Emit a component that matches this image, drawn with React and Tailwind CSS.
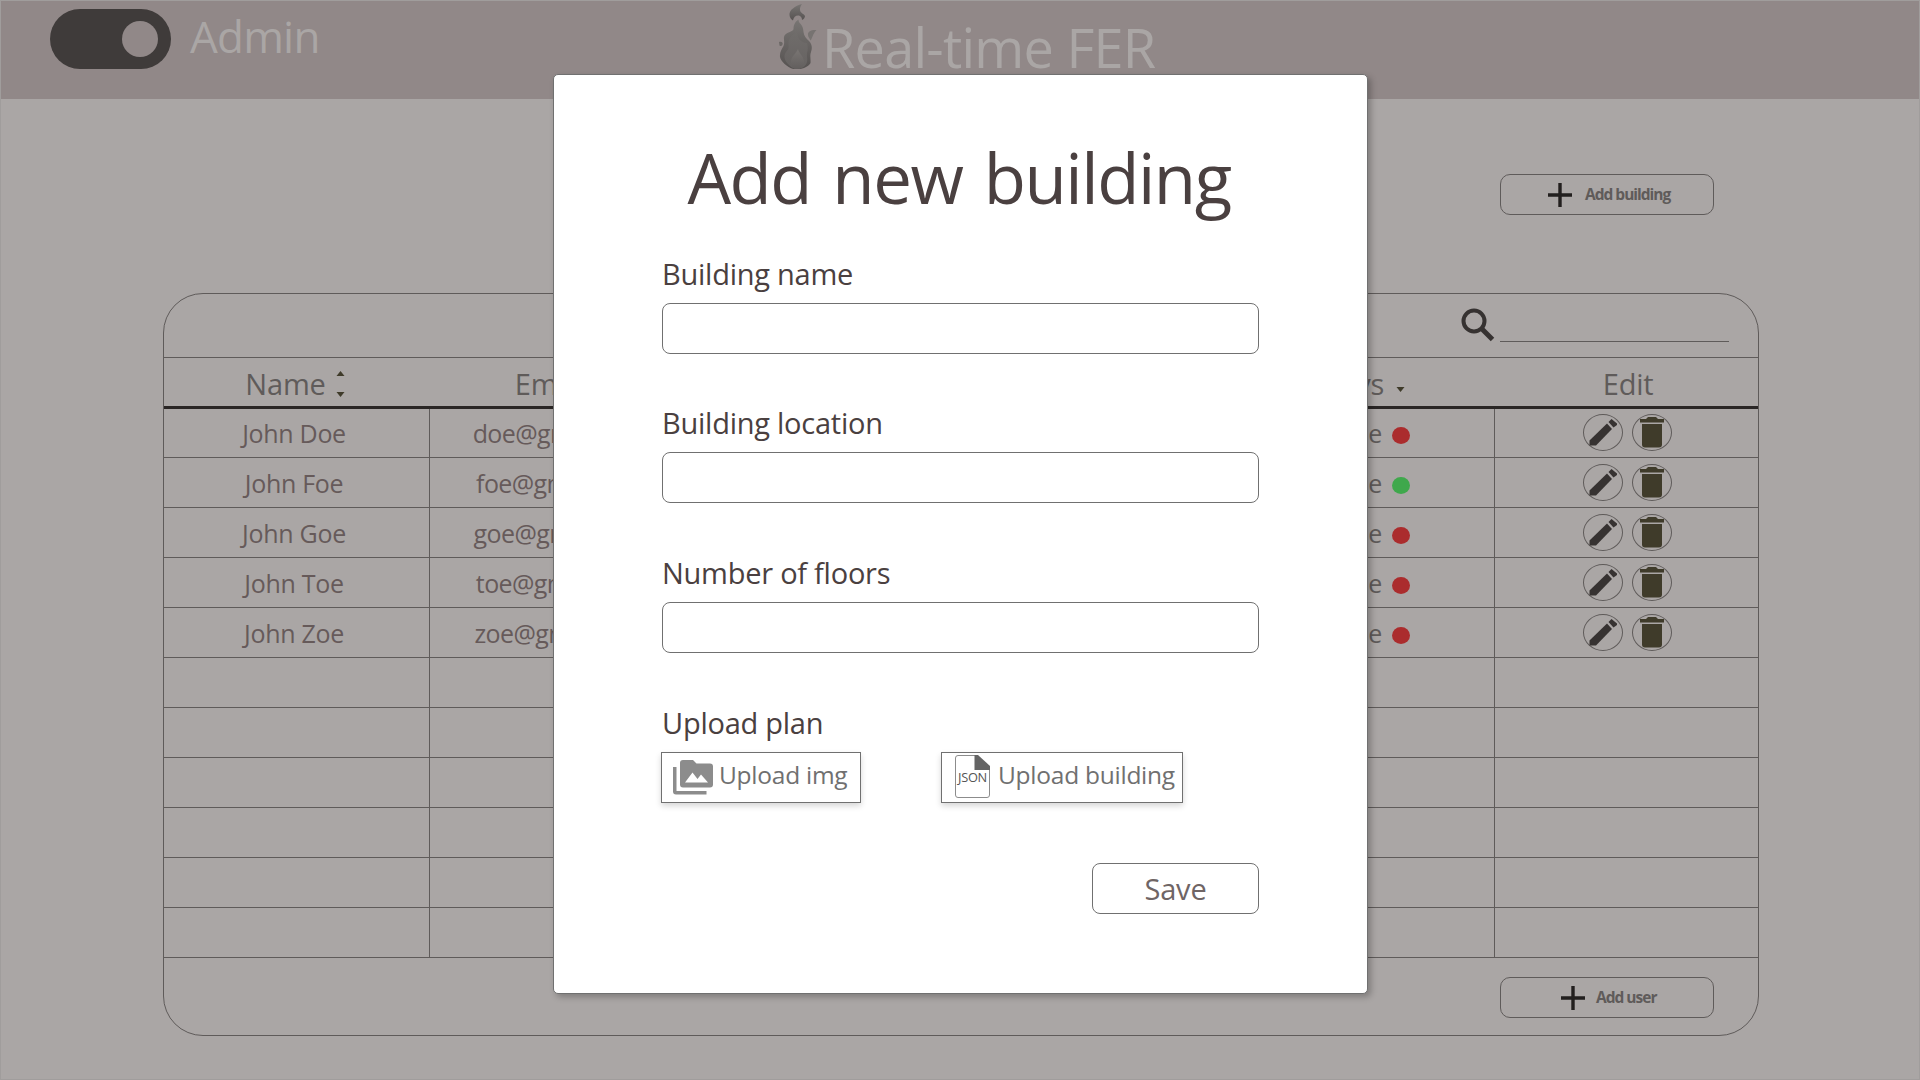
import React from "react";

const ROWS = [
  { name: "John Doe", email: "doe@gmail.com", status: "Offline" },
  { name: "John Foe", email: "foe@gmail.com", status: "Online" },
  { name: "John Goe", email: "goe@gmail.com", status: "Offline" },
  { name: "John Toe", email: "toe@gmail.com", status: "Offline" },
  { name: "John Zoe", email: "zoe@gmail.com", status: "Offline" },
];
const EMPTY_ROWS = 6;

function Flame() {
  return (
    <svg className="block h-[68px] w-[40px]" viewBox="0 0 40 68">
      <defs>
        <linearGradient id="flameOuter" x1="0" y1="0" x2="0" y2="1">
          <stop offset="0" stopColor="#787573" />
          <stop offset="1" stopColor="#565251" />
        </linearGradient>
        <linearGradient id="flameInner" x1="0" y1="0" x2="0" y2="1">
          <stop offset="0" stopColor="#716e6c" />
          <stop offset="1" stopColor="#666261" />
        </linearGradient>
        <linearGradient id="flameCore" x1="0" y1="0" x2="0" y2="1">
          <stop offset="0" stopColor="#7a7674" />
          <stop offset="1" stopColor="#625e5d" />
        </linearGradient>
      </defs>
      <path
        fill="url(#flameOuter)"
        d="M24 3C17 5 11 9 11.500 14C11.700 16.500 13 18.500 15 19.500C15.500 16 18 14 21 14.500C23 15 24 17 24 19C26 18 27 16.500 27 15C26 12.500 22.500 12.500 22 9C21.800 7 22.500 5 24 3Z"
      />
      <path
        fill="url(#flameOuter)"
        d="M20.500 18.500C18 20 15.500 23 15.500 28C15.500 31 7 31 6 36C5.500 39 7 41 5.500 45C4 48 1.500 51 2 56C3 61 11 68 18 68.500C25 68.500 31 65 32.500 62C33 58 31.500 55 33 51C34.500 47 34 43 31 40C28 37 26 35 25.500 31C25.200 28 25 27 24 25C23 22.500 20.500 22 20.500 18.500Z"
      />
      <path
        fill="url(#flameInner)"
        d="M19 27C19 32 11 35 10.500 41C10.200 45 12 47 8 51C5 55 7 60 10 63C13 66.500 16 68 19 68C24 68 28 65 29 61C30 57 28 55 29.500 50C30 47 29.500 44 29 42C24 42 18 38 19 27Z"
      />
      <path
        fill="url(#flameCore)"
        d="M20 48C18 53 13 55 13 61C13 65 16 68 19 68C23 68 26 65 26 61C26 55 21 53 20 48Z"
      />
      <path fill="#777371" d="M38.500 29C34 28.500 29.500 30 30 34C30.200 36.500 32 37.500 32.500 39.500C34 38.500 34.500 33 38.500 29Z" />
      <path fill="#6c6866" d="M1 41C3 40 5.500 41.500 4.500 43.500C4 45 2.500 45.500 1.500 44.500Z" />
    </svg>
  );
}

function Pencil() {
  return (
    <span className="flex h-[37px] w-[40px] items-center justify-center rounded-[50%] border border-[#5f5b5a]">
      <svg className="block h-[27px] w-[28px]" viewBox="0 0 28 27" fill="#363231">
        <path d="M0.500 21.500L18 4.500L23 10L7 26.500H0.500Z" />
        <path d="M19.500 3L22.500 0L28 4.500V6L24.500 8.500Z" />
      </svg>
    </span>
  );
}

function Trash() {
  return (
    <span className="flex h-[37px] w-[40px] items-center justify-center rounded-[50%] border border-[#5f5b5a]">
      <svg className="block h-[31px] w-[24px]" viewBox="0 0 24 31" fill="#3f3b2a">
        <path d="M0 2H6L8 0H16L18 2H24V5.500H0Z" />
        <path d="M2 7H22V27.500Q22 30.500 19 30.500H5Q2 30.500 2 27.500Z" />
      </svg>
    </span>
  );
}

function Plus() {
  return (
    <svg className="block h-6 w-6" viewBox="0 0 24 24" fill="#221f1e">
      <path d="M10.300 0H13.700V10.300H24V13.700H13.700V24H10.300V13.700H0V10.300H10.300Z" />
    </svg>
  );
}

function Field({ label }) {
  return (
    <label className="flex h-[149.4px] flex-col">
      <span className="h-[59px] pt-px text-[29px] leading-[58px] tracking-[-0.25px]">{label}</span>
      <input className="h-[51px] w-full rounded-[8px] border border-[#707070] bg-white outline-none" />
    </label>
  );
}

export default function App() {
  return (
    <div className="relative h-[1080px] w-[1920px] overflow-hidden border border-[#a09d9c] bg-[#aaa6a5] font-['Open_Sans','Noto_Sans',sans-serif] whitespace-nowrap">
      <header className="flex h-[98px] items-start bg-[#918888] text-[#aaa6a5]">
        <div className="mt-2 ml-[49px] flex h-[60px] w-[121px] items-center justify-end rounded-full bg-[#3f3b3a] pr-[13px]">
          <span className="h-9 w-9 rounded-full bg-[#918888]" />
        </div>
        <span className="ml-[19px] w-[588px] text-[44px] leading-[71px] tracking-[-0.8px]">Admin</span>
        <Flame />
        <h1 className="ml-[4px] text-[54px] leading-[93px] tracking-[-0.75px]">Real-time FER</h1>
      </header>

      <div className="flex h-[194px] justify-end pt-[75px] pr-[205px]">
        <button className="flex h-[41px] w-[214px] items-center rounded-[10px] border border-[#5f5b5a] pl-[47px] text-[15.5px] font-bold text-[#5f5b5a]">
          <Plus />
          <span className="mb-[2px] ml-[13px] leading-[38px] tracking-[-1px]">Add building</span>
        </button>
      </div>

      <main className="ml-[162px] h-[743px] w-[1596px] rounded-[40px] border border-[#5f5b5a]">
        <div className="flex h-[64px] items-start justify-end border-b border-[#5f5b5a] pr-[29px]">
          <svg className="mt-[14px] block h-[34px] w-[34px]" viewBox="0 0 34 34" fill="none" stroke="#363231">
            <circle cx="13" cy="13" r="10.500" strokeWidth="4" />
            <path d="M20.500 20.500L31.500 31.500" strokeWidth="5" />
          </svg>
          <span className="ml-[5px] h-[48px] w-[229px] border-b border-[#5f5b5a]" />
        </div>

        <div className="relative z-10 grid h-[51px] grid-cols-[266px_repeat(4,266.3px)_1fr] border-b-[3px] border-[#2a2625] text-[29px] leading-[51px] tracking-[-0.2px] text-[#5f5b5a]">
          <div className="flex items-center justify-center pr-[4px]">
            Name
            <svg className="ml-[10px] block h-[26px] w-[9px]" viewBox="0 0 9 26" fill="#3f3b2a">
              <path d="M4.500 0L8.500 5H0.500Z" />
              <path d="M4.500 26L8.500 21H0.500Z" />
            </svg>
          </div>
          <div className="flex items-center justify-center">
            Email
            <span className="w-6" />
          </div>
          <div />
          <div />
          <div className="flex items-center justify-end pr-[90px]">
            Days
            <svg className="mt-[11px] ml-[12px] block h-[5px] w-[9px]" viewBox="0 0 9 5" fill="#3f3b2a">
              <path d="M4.500 5L8.500 0H0.500Z" />
            </svg>
          </div>
          <div className="pl-[3px] text-center">Edit</div>
        </div>

        <div className="-mt-px">
          {ROWS.map((row) => (
            <div key={row.name} className="grid h-[50px] grid-cols-[266px_repeat(4,266.3px)_1fr] border-b border-[#5f5b5a] text-[25px] leading-[51px] text-[#665a5a]">
              <div className="border-r border-[#5f5b5a] pr-[5px] text-center tracking-[-0.3px]">{row.name}</div>
              <div className="pr-[2px] text-center tracking-[-0.6px]">{row.email}</div>
              <div />
              <div />
              <div className="flex items-center justify-end border-r border-[#5f5b5a] pr-[84px] text-[#5f5b5a]">
                {row.status}
                <span
                  className={
                    row.status === "Online"
                      ? "mt-[3px] ml-[10px] h-[17px] w-[18px] rounded-[50%] bg-[#3fa84c]"
                      : "mt-[3px] ml-[10px] h-[17px] w-[18px] rounded-[50%] bg-[#ab2c2d]"
                  }
                />
              </div>
              <div className="flex items-center justify-center gap-[9px] pb-[2px] pl-px">
                <Pencil />
                <Trash />
              </div>
            </div>
          ))}
          {Array.from({ length: EMPTY_ROWS }, (_, i) => (
            <div key={i} className="grid h-[50px] grid-cols-[266px_repeat(4,266.3px)_1fr] border-b border-[#5f5b5a]">
              <div className="border-r border-[#5f5b5a]" />
              <div />
              <div />
              <div />
              <div className="border-r border-[#5f5b5a]" />
              <div />
            </div>
          ))}
        </div>

        <div className="flex justify-end pt-[19px] pr-[44px]">
          <button className="flex h-[41px] w-[214px] items-center rounded-[10px] border border-[#5f5b5a] pl-[60px] text-[15.5px] font-bold text-[#5f5b5a]">
            <Plus />
            <span className="mb-[2px] ml-[11px] leading-[38px] tracking-[-1px]">Add user</span>
          </button>
        </div>
      </main>

      <section className="absolute top-[73px] left-[552px] z-20 h-[920px] w-[815px] rounded-[5px] border border-[#707070] bg-white px-[108px] text-[#4a4040] shadow-[3px_3px_6px_rgba(0,0,0,0.25)]">
        <h2 className="h-[169px] pt-[52px] pr-[3px] text-center text-[69px] leading-[100px] tracking-[-1.5px] [word-spacing:5px]">Add new building</h2>
        <Field label="Building name" />
        <Field label="Building location" />
        <Field label="Number of floors" />
        <div className="h-[59.8px] pt-[2px] text-[29px] leading-[58px] tracking-[-0.25px]">Upload plan</div>
        <div className="flex gap-[80px] text-[24.5px] leading-[43px] tracking-[-0.25px] text-[#707070]">
          <button className="-ml-px flex h-[51px] w-[200px] items-start border border-[#707070] pl-[11px] shadow-[0_3px_6px_rgba(0,0,0,0.16)]">
            <svg className="mt-[7px] block h-[35px] w-[40px]" viewBox="0 0 40 35">
              <path fill="#8c8c8c" d="M0 7H3.500V31H33.500V34.500H3Q0 34.500 0 31.500Z" />
              <path fill="#8c8c8c" d="M10 0H20L23.500 3.500H37Q40 3.500 40 6.500V24.500Q40 27.500 37 27.500H10Q7 27.500 7 24.500V3Q7 0 10 0Z" />
              <path fill="#fff" d="M12 22.500L19.500 12.500L24.500 19L28 14.500L35 22.500Z" />
            </svg>
            <span className="ml-[6px]">Upload img</span>
          </button>
          <button className="flex h-[51px] w-[242px] items-start border border-[#707070] pl-[13px] shadow-[0_3px_6px_rgba(0,0,0,0.16)]">
            <svg className="mt-[2px] block h-[43px] w-[35px]" viewBox="0 0 35 43">
              <path fill="none" stroke="#8c8c8c" strokeWidth="1" d="M20 0.500H3Q0.500 0.500 0.500 3V40Q0.500 42.500 3 42.500H32Q34.500 42.500 34.500 40V14" />
              <path fill="#646464" d="M19.500 0H23L35 11V15H19.500Z" />
              <text x="17.500" y="26.500" textAnchor="middle" textLength="29" lengthAdjust="spacingAndGlyphs" fontSize="12" fill="#555">JSON</text>
            </svg>
            <span className="ml-[8px]">Upload building</span>
          </button>
        </div>
        <div className="mt-[60px] flex justify-end">
          <button className="h-[51px] w-[167px] rounded-[8px] border border-[#707070] text-[29px] leading-[49px] tracking-[-0.2px] text-[#6f6565]">Save</button>
        </div>
      </section>
    </div>
  );
}
